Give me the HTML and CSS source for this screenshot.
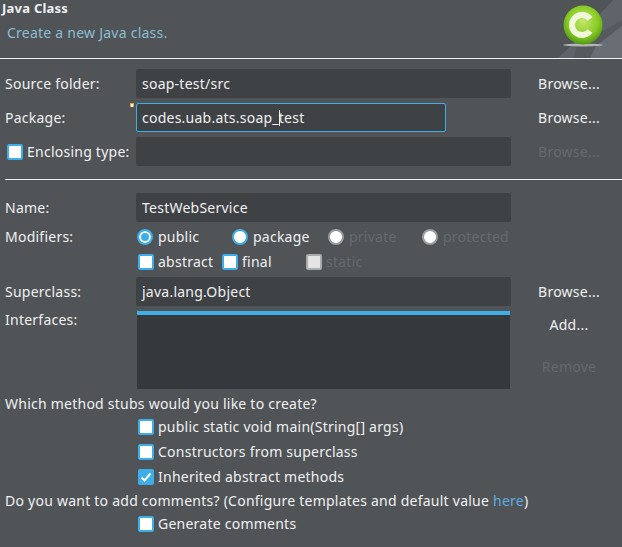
FILE: index.html
```html
<!DOCTYPE html>
<html lang="en">
<head>
    <meta charset="UTF-8">
    <title>Java Class</title>
    <link rel="stylesheet" href="styles.css">
</head>
<body>
    <div class="banner">
        <div class="banner-text">
            <div class="banner-title">Java Class</div>
            <div class="banner-desc">Create a new Java class.</div>
        </div>
        <svg class="banner-icon" width="90" height="58" viewBox="0 0 90 58">
            <defs>
                <radialGradient id="ball" cx="0.5" cy="0.4" r="0.62">
                    <stop offset="0" stop-color="#c4e86a"/>
                    <stop offset="0.65" stop-color="#86c922"/>
                    <stop offset="1" stop-color="#4a9410"/>
                </radialGradient>
            </defs>
            <polygon points="26,58 39,46 81,0 90,0 90,58" fill="#5f646a"/>
            <polygon points="41,58 45,46 90,20 90,58" fill="#565a5f"/>
            <polygon points="58,58 64,46 90,26 90,58" fill="#696e75"/>
            <ellipse cx="51" cy="45" rx="20" ry="1.5" fill="#b4b6b2"/>
            <circle cx="51" cy="25" r="19.5" fill="url(#ball)"/>
            <path d="M58 19 A10 10 0 1 0 58 31" fill="none" stroke="#f0f8dc" stroke-width="6"/>
        </svg>
    </div>
    <div class="rule"></div>

    <div class="group">
        <div class="row">
            <label class="label">Source folder:</label>
            <div class="field">soap-test/src</div>
            <div class="btn">Browse...</div>
        </div>
        <div class="row">
            <label class="label">Package:</label>
            <div class="field field-focus">
                <span class="marker"></span>
                codes.uab.ats.soap_<span class="caret"></span>test
            </div>
            <div class="btn">Browse...</div>
        </div>
        <div class="row">
            <label class="label label-check"><span class="check"></span>Enclosing type:</label>
            <div class="field"></div>
            <div class="btn disabled">Browse...</div>
        </div>
    </div>
    <div class="rule rule-mid"></div>

    <div class="group">
        <div class="row">
            <label class="label">Name:</label>
            <div class="field">TestWebService</div>
        </div>
    </div>
    <div class="options">
        <div class="row-small">
            <label class="label">Modifiers:</label>
            <div class="radios">
                <span class="opt"><span class="radio on"></span>public</span>
                <span class="opt"><span class="radio plain"></span>package</span>
                <span class="opt disabled"><span class="radio off"></span>private</span>
                <span class="opt disabled"><span class="radio off"></span>protected</span>
            </div>
        </div>
        <div class="row-small">
            <span class="label"></span>
            <div class="checks">
                <span class="opt"><span class="check"></span>abstract</span>
                <span class="opt"><span class="check"></span>final</span>
                <span class="opt disabled"><span class="check check-off"></span>static</span>
            </div>
        </div>
    </div>
    <div class="group">
        <div class="row">
            <label class="label">Superclass:</label>
            <div class="field">java.lang.Object</div>
            <div class="btn">Browse...</div>
        </div>
    </div>
    <div class="row-list">
        <label class="label label-top">Interfaces:</label>
        <div class="list"></div>
        <div class="list-btns">
            <div class="btn">Add...</div>
            <div class="btn disabled">Remove</div>
        </div>
    </div>

    <div class="line line-first">Which method stubs would you like to create?</div>
    <div class="stub"><span class="check"></span>public static void main(String[] args)</div>
    <div class="stub stub-next"><span class="check"></span>Constructors from superclass</div>
    <div class="stub stub-next"><span class="check checked">
        <svg width="12" height="12" viewBox="0 0 12 12"><path d="M1.5 6.5 L4.5 9.5 L10.5 2.5" fill="none" stroke="#fff" stroke-width="2"/></svg>
    </span>Inherited abstract methods</div>
    <div class="line line-second">Do you want to add comments? (Configure templates and default value <a class="link">here</a>)</div>
    <div class="stub"><span class="check"></span>Generate comments</div>
</body>
</html>
```

FILE: styles.css
```css
body {
    margin: 0;
    height: 547px;
    overflow: hidden;
    background: #505457;
    color: #eff0f1;
    font-family: "Noto Sans", sans-serif;
    font-size: 14px;
    letter-spacing: 0.24px;
}
.banner {
    display: flex;
    justify-content: space-between;
    height: 58px;
}
.banner-title {
    margin-left: 2px;
    font-size: 13px;
    font-weight: bold;
    line-height: 16px;
}
.banner-desc {
    margin: 9px 0 0 7px;
    line-height: 16px;
    color: #8dbdd2;
}
.rule {
    height: 1px;
    background: #eff0f1;
}
.rule-mid {
    margin: 13px 0 13px 5px;
}
.group {
    display: flex;
    flex-direction: column;
    gap: 5px;
    padding-top: 10px;
}
.rule-mid + .group {
    padding-top: 0;
}
.row,
.row-small,
.row-list {
    display: grid;
    grid-template-columns: 131px 375px 116px;
    padding-left: 5px;
}
.row {
    height: 29px;
    align-items: center;
}
.row-small {
    height: 22px;
    align-items: center;
    margin-bottom: 3px;
    line-height: 20px;
}
.options {
    padding: 4px 0 1px;
}
.options + .group {
    padding-top: 0;
}
.label-check {
    display: flex;
    align-items: center;
    gap: 4px;
    margin-left: 2px;
}
.field {
    position: relative;
    height: 29px;
    padding-left: 6px;
    box-sizing: border-box;
    line-height: 29px;
    background: #3f4245;
    border-radius: 2px;
}
.field-focus {
    width: 310px;
    line-height: 27px;
    padding-left: 5px;
    border: 1px solid #3daee9;
}
.marker {
    position: absolute;
    left: -7px;
    top: -1px;
    width: 2px;
    height: 3px;
    background: #fff;
    border: 1px solid #f0a030;
    border-bottom-width: 0;
}
.caret {
    display: inline-block;
    width: 1px;
    height: 16px;
    margin-right: -1px;
    vertical-align: -3px;
    background: #eff0f1;
}
.btn {
    text-align: center;
    padding-left: 5px;
    margin-left: -5px;
}
.disabled {
    color: #656a6d;
}
.radios,
.checks {
    display: grid;
    margin-left: 2px;
}
.radios {
    grid-template-columns: 95px 96px 94px auto;
    margin-left: 1px;
}
.checks {
    grid-template-columns: 84px 84px auto;
}
.opt {
    display: flex;
    align-items: center;
    gap: 4px;
    white-space: nowrap;
}
.check,
.radio {
    flex: none;
    display: inline-flex;
    align-items: center;
    justify-content: center;
    box-sizing: border-box;
    width: 16px;
    height: 16px;
    background: #fff;
    border: 2px solid #3daee9;
}
.check {
    border-radius: 2px;
}
.checked {
    background: #3daee9;
}
.check-off {
    background: #e4e4e4;
    border-color: #a9abac;
}
.radio {
    border-radius: 50%;
    margin-right: 1px;
}
.radio.on {
    background: #3daee9;
    box-shadow: inset 0 0 0 2px #fff;
}
.radio.off {
    border-color: #9a9c9e;
}
.radio.plain {
    border-color: #3daee9;
}
.row-list {
    height: 78px;
    margin-top: 5px;
}
.label-top {
    line-height: 18px;
}
.list {
    height: 78px;
    margin-left: 1px;
    width: 373px;
    box-sizing: border-box;
    background: #36393b;
    border-top: 4px solid #3daee9;
}
.list-btns {
    display: flex;
    flex-direction: column;
    gap: 23px;
    padding-top: 4px;
}
.line,
.stub {
    height: 22px;
    line-height: 22px;
    white-space: nowrap;
}
.line {
    padding-left: 5px;
}
.line-first {
    margin-top: 4px;
}
.line-second {
    margin-top: 2px;
}
.stub {
    display: flex;
    align-items: center;
    gap: 4px;
    margin-top: 1px;
    padding-left: 138px;
}
.stub-next {
    margin-top: 3px;
}
.link {
    color: #5dade2;
}
```
